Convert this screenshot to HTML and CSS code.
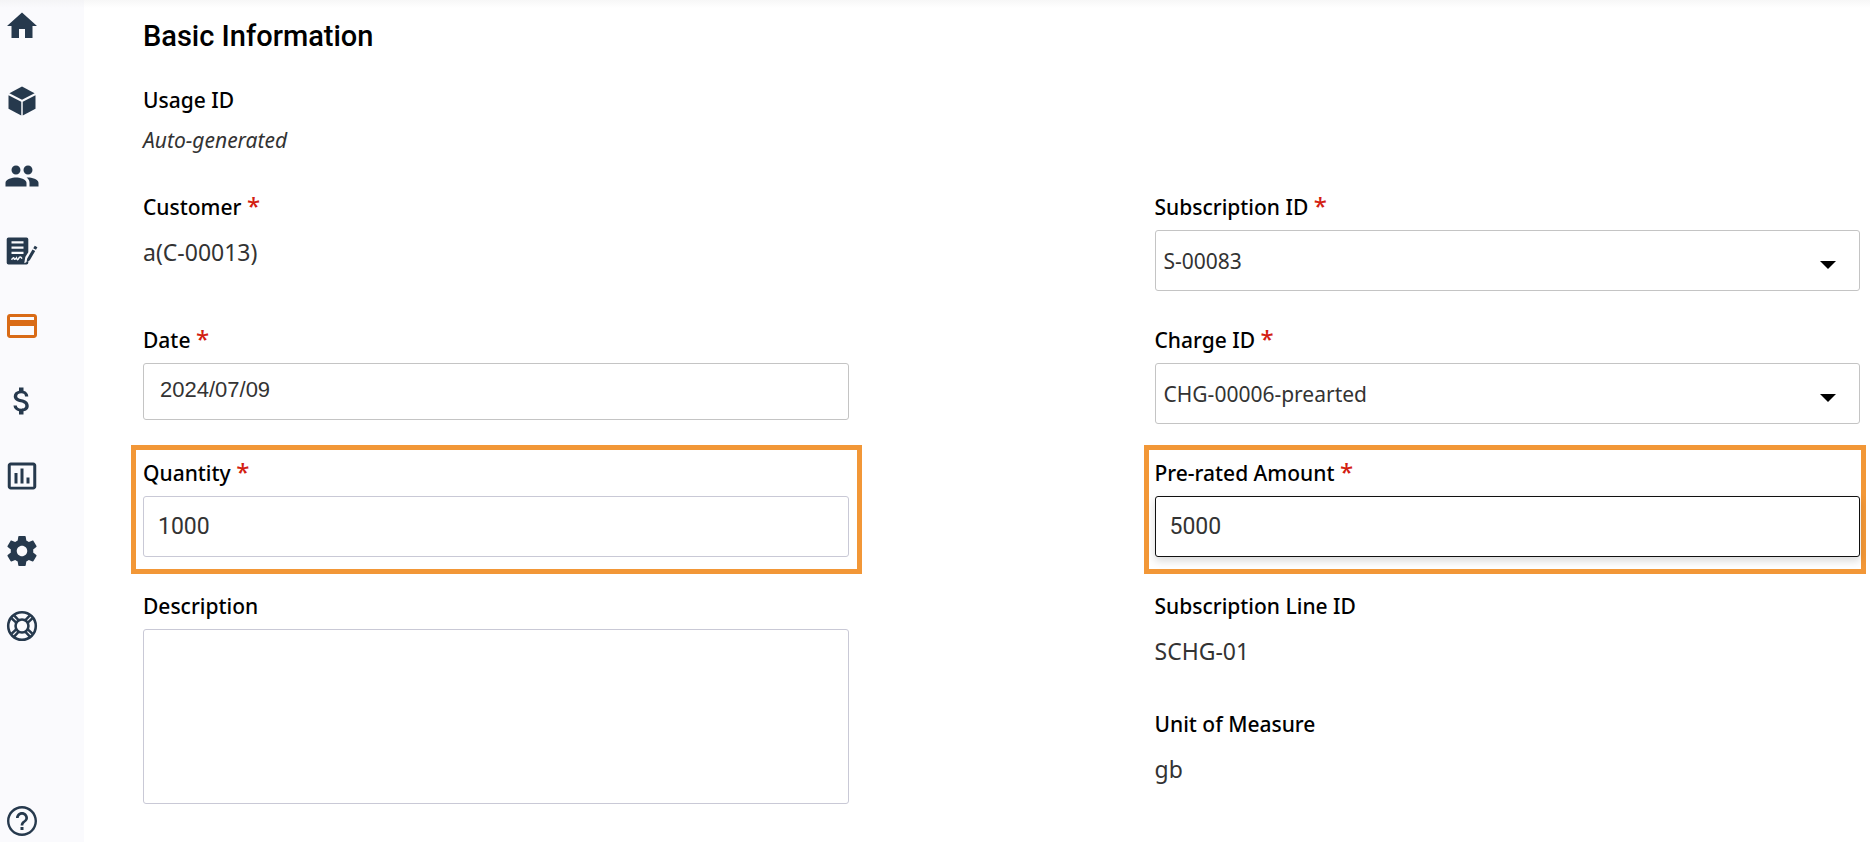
FILE: index.html
```html
<!DOCTYPE html>
<html lang="en">
<head>
  <meta charset="UTF-8">
  <meta name="viewport" content="width=device-width, initial-scale=1.0">
  <title>Usage</title>
  <link rel="stylesheet" href="styles.css">
</head>
<body>
  <nav class="sidebar">
    <a href="#" aria-label="Home"><svg viewBox="0 0 24 24"><path d="M10 20v-6h4v6h5v-8h3L12 3 2 12h3v8z"/></svg></a>
    <a href="#" aria-label="Products"><svg viewBox="0 0 24 24"><path d="M12 2.4 20.4 6.8 12 11.2 3.6 6.8z"/><path d="M3 8.1 11.5 12.5V21.6L3 17.1z"/><path d="M21 8.1 12.5 12.5V21.6L21 17.1z"/></svg></a>
    <a href="#" aria-label="Customers"><svg viewBox="0 0 24 24"><path d="M16 11c1.660 0 2.990-1.340 2.990-3S17.660 5 16 5c-1.660 0-3 1.340-3 3s1.340 3 3 3zm-8 0c1.660 0 2.990-1.340 2.990-3S9.660 5 8 5C6.340 5 5 6.340 5 8s1.340 3 3 3zm0 2c-2.330 0-7 1.170-7 3.500V19h14v-2.500c0-2.330-4.670-3.500-7-3.500zm8 0c-.29 0-.62.02-.97.05 1.160.84 1.970 1.970 1.970 3.450V19h6v-2.500c0-2.330-4.670-3.500-7-3.500z"/></svg></a>
    <a href="#" aria-label="Subscriptions"><svg viewBox="0 0 24 24"><path fill-rule="evenodd" d="M3 3h12a1.2 1.2 0 0 1 1.2 1.2v8.6l-2 3.2-.7 4.2 2.7-1.4v1A1.2 1.2 0 0 1 15 21H3a1.2 1.2 0 0 1-1.200-1.200V4.200A1.200 1.200 0 0 1 3 3zM5 5.500V7h8V5.500zM5 9v1.500h8V9zM5 12.500V14h8v-1.500z"/><path class="signature" d="M5 17.800q1.500-2 1.700-.8t1.600-.4q.6 2.200 1.500.3t2.200.2"/><path d="m20.500 8.500 1.800 1-1 1.700-1.800-1zM19 11l1.800 1-3.600 6.100-2.200 1.600.4-2.600z"/></svg></a>
    <a href="#" aria-label="Billing" class="active"><svg viewBox="0 0 24 24"><path d="M20 4H4c-1.110 0-1.990.89-1.990 2L2 18c0 1.110.89 2 2 2h16c1.110 0 2-.89 2-2V6c0-1.110-.89-2-2-2zm0 14H4v-6h16v6zm0-10H4V6h16v2z"/></svg></a>
    <a href="#" aria-label="Payments"><svg viewBox="0 0 24 24"><path d="M11.800 10.900c-2.270-.59-3-1.200-3-2.150 0-1.090 1.010-1.850 2.700-1.850 1.780 0 2.440.85 2.500 2.100h2.210c-.07-1.720-1.120-3.300-3.210-3.810V3h-3v2.160c-1.940.42-3.500 1.680-3.500 3.610 0 2.310 1.910 3.460 4.700 4.130 2.500.6 3 1.480 3 2.410 0 .69-.49 1.790-2.700 1.790-2.060 0-2.870-.92-2.980-2.100h-2.200c.12 2.190 1.760 3.420 3.680 3.830V21h3v-2.150c1.950-.37 3.500-1.500 3.500-3.550 0-2.840-2.430-3.810-4.700-4.400z"/></svg></a>
    <a href="#" aria-label="Reports"><svg viewBox="0 0 24 24"><path d="M9 17H7v-7h2v7zm4 0h-2V7h2v10zm4 0h-2v-4h2v4zm2.500 2.100h-15V5h15v14.100zm0-16.100h-15c-1.100 0-2 .9-2 2v14c0 1.100.9 2 2 2h15c1.100 0 2-.9 2-2V5c0-1.100-.9-2-2-2z"/></svg></a>
    <a href="#" aria-label="Settings"><svg viewBox="0 0 24 24"><path d="M19.430 12.980c.04-.32.07-.64.07-.98s-.03-.66-.07-.98l2.110-1.650c.19-.15.24-.42.12-.64l-2-3.460c-.12-.22-.39-.3-.61-.22l-2.490 1c-.52-.4-1.080-.73-1.690-.98l-.38-2.650C14.460 2.180 14.250 2 14 2h-4c-.25 0-.46.18-.49.42l-.38 2.650c-.61.25-1.170.59-1.690.98l-2.490-1c-.23-.09-.49 0-.61.22l-2 3.460c-.13.22-.07.49.12.64l2.110 1.650c-.04.32-.07.65-.07.98s.03.66.07.98l-2.110 1.650c-.19.15-.24.42-.12.64l2 3.460c.12.22.39.3.61.22l2.490-1c.52.4 1.080.73 1.690.98l.38 2.650c.03.24.24.42.49.42h4c.25 0 .46-.18.49-.42l.38-2.650c.61-.25 1.170-.59 1.690-.98l2.490 1c.23.09.49 0 .61-.22l2-3.460c.12-.22.07-.49-.12-.64l-2.110-1.650zM12 15.500c-1.930 0-3.500-1.570-3.500-3.500s1.570-3.500 3.500-3.500 3.500 1.570 3.500 3.500-1.570 3.500-3.500 3.500z"/></svg></a>
    <a href="#" aria-label="Support"><svg class="line" viewBox="0 0 24 24"><circle cx="12" cy="12" r="9.200"/><circle cx="12" cy="12" r="4.300"/><path d="m5.100 6.900 3.400 3.200M6.900 5.100l3.200 3.400M17.100 5.100l-3.200 3.400M18.900 6.900l-3.400 3.200M5.100 17.100l3.400-3.200M6.900 18.900l3.200-3.400M17.100 18.900l-3.200-3.400M18.900 17.100l-3.400-3.200"/></svg></a>
    <a href="#" aria-label="Help" class="help"><svg viewBox="0 0 24 24"><path d="M11 18h2v-2h-2v2zm1-16C6.480 2 2 6.480 2 12s4.480 10 10 10 10-4.480 10-10S17.520 2 12 2zm0 18.400c-4.640 0-8.400-3.760-8.400-8.400S7.360 3.600 12 3.600s8.400 3.760 8.400 8.400-3.760 8.400-8.400 8.400zM12 6c-2.210 0-4 1.790-4 4h1.800c0-1.210.99-2.200 2.200-2.200s2.200.99 2.200 2.200c0 2-3.100 1.750-3.100 5h1.800c0-2.250 3.100-2.500 3.100-5 0-2.210-1.790-4-4-4z"/></svg></a>
  </nav>

  <main>
    <h1>Basic Information</h1>
    <form class="fields">
      <div class="field full">
        <span class="label">Usage ID</span>
        <em class="auto">Auto-generated</em>
      </div>

      <div class="field">
        <span class="label">Customer <b>*</b></span>
        <span class="value">a(C-00013)</span>
      </div>
      <div class="field">
        <label for="subscription">Subscription ID <b>*</b></label>
        <div class="select">
          <select id="subscription">
            <option>S-00083</option>
          </select>
        </div>
      </div>

      <div class="field">
        <label for="date">Date <b>*</b></label>
        <input class="date" type="text" id="date" value="2024/07/09">
      </div>
      <div class="field">
        <label for="charge">Charge ID <b>*</b></label>
        <div class="select">
          <select id="charge">
            <option>CHG-00006-prearted</option>
          </select>
        </div>
      </div>

      <div class="field highlight">
        <label for="quantity">Quantity <b>*</b></label>
        <input class="number" type="text" id="quantity" value="1000">
      </div>
      <div class="field highlight right">
        <label for="amount">Pre-rated Amount <b>*</b></label>
        <input class="number current" type="text" id="amount" value="5000">
      </div>

      <div class="field">
        <label for="description">Description</label>
        <textarea id="description"></textarea>
      </div>
      <div class="stack">
        <div class="field">
          <span class="label">Subscription Line ID</span>
          <span class="value">SCHG-01</span>
        </div>
        <div class="field">
          <span class="label">Unit of Measure</span>
          <span class="value">gb</span>
        </div>
      </div>
    </form>
  </main>
</body>
</html>
```

FILE: styles.css
```css
* {
  box-sizing: border-box;
}
body {
  margin: 0;
  display: flex;
  min-height: 100vh;
  font-family: "Noto Sans", sans-serif;
  font-size: 21px;
  color: #000;
  background: linear-gradient(#f7f7f7, #fff 8px);
}
.sidebar {
  display: flex;
  flex-direction: column;
  gap: 39px;
  flex: 0 0 84px;
  padding: 8px 0 3px 4px;
  background: linear-gradient(#f4f4f6, #fafafd 8px);
}
.sidebar a {
  width: 36px;
  height: 36px;
  color: #26394d;
}
.sidebar a.active {
  color: #d96b16;
}
.sidebar a.help {
  margin-top: auto;
}
.sidebar svg {
  display: block;
  width: 36px;
  height: 36px;
  fill: currentColor;
}
.sidebar svg.line {
  fill: none;
  stroke: currentColor;
  stroke-width: 1.7;
}
.signature {
  fill: none;
  stroke: #fafafd;
}
main {
  flex: 1;
  padding: 20px 10px 38px 59px;
}
h1 {
  margin: 0 0 34px;
  font-family: Roboto, sans-serif;
  font-size: 29px;
  font-weight: 500;
  line-height: 32px;
}
.fields {
  display: grid;
  grid-template-columns: 1fr 1fr;
  gap: 35px 306px;
}
.field {
  display: flex;
  flex-direction: column;
}
.full {
  grid-column: 1 / -1;
  margin-bottom: 4px;
}
label,
.label {
  height: 28px;
  margin-bottom: 9px;
  font-weight: 500;
  line-height: 28px;
}
b {
  color: #d32011;
  font-size: 24px;
  font-weight: 500;
  line-height: 20px;
}
.auto {
  margin-top: 3px;
  color: #333;
  line-height: 28px;
}
.value {
  margin-top: 6px;
  font-size: 23px;
  color: #333;
  line-height: 32px;
}
input,
select,
textarea {
  width: 100%;
  height: 61px;
  border: 1px solid #c4c4c4;
  border-radius: 3px;
  background: #fff;
  color: #333;
  font-family: "Noto Sans", sans-serif;
  font-size: 21px;
  outline: none;
}
select {
  display: block;
  appearance: none;
  padding: 0 48px 0 8px;
}
.select {
  position: relative;
}
.select::after {
  content: "";
  position: absolute;
  top: 31px;
  right: 24px;
  border: 8px solid transparent;
  border-top-color: #000;
  border-bottom: 0;
  pointer-events: none;
}
.date {
  height: 57px;
  padding: 0 16px 3px;
  font-family: "Liberation Sans", sans-serif;
  font-size: 22px;
}
.number {
  padding: 0 14px;
  border-color: #c9c9d6;
  color: #333;
  font-family: Roboto, sans-serif;
  font-size: 23px;
}
.current {
  border-color: #111;
  box-shadow: 0 4px 8px rgba(0, 0, 0, 0.15);
}
textarea {
  height: 175px;
  border-color: #c9c9d6;
  resize: none;
}
/* orange frame sits outside the column so the inputs stay aligned */
.highlight {
  margin: -14px -13px -17px -12px;
  padding: 9px 8px 12px 7px;
  border: 5px solid #f29737;
}
.highlight.right {
  margin-left: -11px;
  margin-right: -6px;
  padding-left: 6px;
  padding-right: 1px;
}
.stack {
  display: flex;
  flex-direction: column;
  gap: 43px;
}
```
